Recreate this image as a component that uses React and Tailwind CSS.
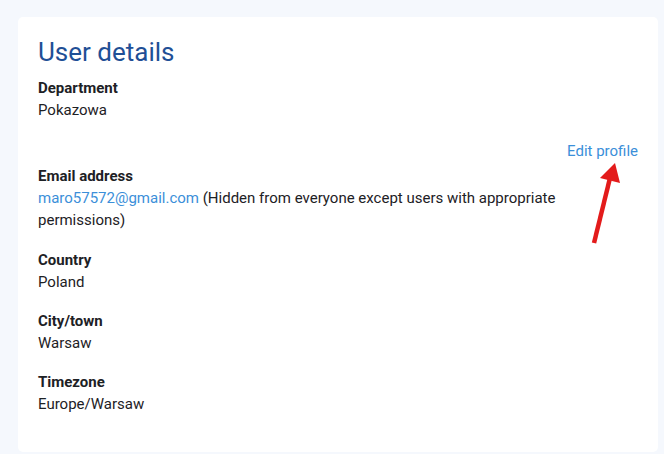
export default function App() {
  const fields = [
    { label: "Country", value: "Poland" },
    { label: "City/town", value: "Warsaw" },
    { label: "Timezone", value: "Europe/Warsaw" },
  ];

  return (
    <div
      className="min-h-[454px] bg-[#f5f8fd] pt-[17px] pl-[18px] pr-[6px] pb-[2px] text-[#1d2125]"
      style={{ fontFamily: "Roboto, 'Liberation Sans', sans-serif" }}
    >
      <section className="relative bg-white rounded-[5px] px-5 pt-[19px] pb-[37px]">
        <h2 className="text-[26px] leading-[32px] text-[#1f4f96] font-normal mb-[9px]">User details</h2>

        <dl className="text-[15px] leading-[22px]">
          <div>
            <dt className="font-bold">Department</dt>
            <dd>Pokazowa</dd>
          </div>

          <div className="flex justify-end mt-[19px] mb-[3px]">
            <a href="#" className="text-[#3b8fd9] hover:underline">
              Edit profile
            </a>
          </div>

          <div className="mb-[18px]">
            <dt className="font-bold">Email address</dt>
            <dd>
              <a href="#" className="text-[#3b8fd9]">maro57572@gmail.com</a>
              <span> (Hidden from everyone except users with appropriate</span>
              <br />
              <span>permissions)</span>
            </dd>
          </div>

          {fields.map((f) => (
            <div key={f.label} className="mb-[17px] last:mb-0">
              <dt className="font-bold">{f.label}</dt>
              <dd>{f.value}</dd>
            </div>
          ))}
        </dl>

        {/* red annotation arrow pointing at Edit profile */}
        <svg
          className="absolute left-[556px] top-[123px] pointer-events-none"
          width="60"
          height="110"
          viewBox="0 0 60 110"
        >
          <line x1="20" y1="103" x2="36" y2="38" stroke="#e31b1b" strokeWidth="4.5" strokeLinecap="butt" />
          <polygon points="41,23 26,38 46,43" fill="#e31b1b" />
        </svg>
      </section>
    </div>
  );
}
